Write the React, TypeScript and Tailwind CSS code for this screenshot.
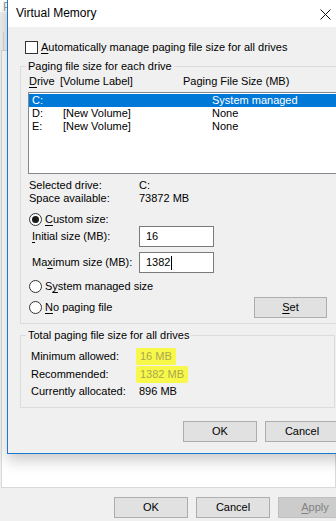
const font = "font-['Liberation_Sans',Arial,sans-serif]";

const U = ({ children }: { children: string }) => <span className="underline underline-offset-[2px]">{children}</span>;

const Radio = ({ checked }: { checked?: boolean }) => (
  <span className="flex h-[13px] w-[13px] shrink-0 items-center justify-center rounded-full border border-[#333] bg-white">
    {checked && <span className="h-[7px] w-[7px] rounded-full bg-[#1a1a1a]" />}
  </span>
);

const Btn = ({ children, w = 'w-[74px]', disabled }: { children: React.ReactNode; w?: string; disabled?: boolean }) => (
  <div
    className={`${w} flex h-[21px] shrink-0 items-center justify-center border ${
      disabled ? 'border-[#bfbfbf] bg-[#cccccc] text-[#838383]' : 'border-[#adadad] bg-[#e1e1e1] text-black'
    }`}
  >
    {children}
  </div>
);

const drives = [
  { d: 'C:', label: '', size: 'System managed', selected: true },
  { d: 'D:', label: '[New Volume]', size: 'None' },
  { d: 'E:', label: '[New Volume]', size: 'None' },
];

export default function App() {
  return (
    <div className={`relative h-[521px] w-[336px] overflow-hidden whitespace-nowrap bg-[#f0f0f0] text-[11px] leading-[13px] text-black ${font}`}>
      {/* parent window: Performance Options */}
      <div className="flex h-[12px] items-end overflow-hidden bg-white pl-[3px] text-[12px] text-[#9a9a9a]">
        <span className="leading-[10px]">P</span>
      </div>
      <div className="h-[20px]" />
      <div className="ml-[3px] h-[18px] border-l border-[#d9d9d9]" />
      <div className="ml-[1px] h-[438px] border border-[#d9d9d9] bg-white" />
      <div className="mt-[9px] flex gap-[8px] pl-[114px]">
        <Btn>OK</Btn>
        <Btn>Cancel</Btn>
        <Btn disabled>
          <U>A</U>pply
        </Btn>
      </div>

      {/* Virtual Memory dialog */}
      <div className="absolute left-[7px] top-0 flex h-[454px] w-[370px] flex-col border-b border-l border-[#1a78cf] bg-[#f0f0f0] shadow-[0_6px_14px_rgba(0,0,0,0.22)]">
        <div className="flex h-[27px] shrink-0 items-center bg-white">
          <span className="w-[312px] pl-[8px] text-[12px]">Virtual Memory</span>
          <svg width="11" height="11" viewBox="0 0 11 11" className="mt-[1px]">
            <path d="M0.5 0.5 L10.5 10.5 M10.5 0.5 L0.5 10.5" stroke="#111" strokeWidth="1" fill="none" />
          </svg>
        </div>

        <div className="pl-[17px] pt-[14px]">
          <div className="flex h-[13px] items-center gap-[3px]">
            <span className="h-[13px] w-[13px] border border-[#333] bg-white" />
            <span>
              <U>A</U>utomatically manage paging file size for all drives
            </span>
          </div>
        </div>

        <fieldset className="ml-[12px] mt-[5px] w-[315px] border border-[#dcdcdc] pb-[6px]">
          <legend className="ml-[5px] px-[2px] leading-[14px]">Paging file size for each drive</legend>
          <div className="flex h-[14px] items-center pl-[8px] pt-[3px]">
            <span className="w-[31px]">
              <U>D</U>rive
            </span>
            <span className="w-[123px]">[Volume Label]</span>
            <span>Paging File Size (MB)</span>
          </div>
          <div className="ml-[7px] mt-[5px] h-[82px] w-[320px] border border-[#828790] bg-white pt-[1px]">
            {drives.map((r) => (
              <div
                key={r.d}
                className={`flex h-[13px] items-center pl-[3px] ${r.selected ? 'bg-[#0078d7] text-white' : ''}`}
              >
                <span className="w-[31px]">{r.d}</span>
                <span className="w-[149px]">{r.label}</span>
                <span>{r.size}</span>
              </div>
            ))}
          </div>

          <div className="mt-[5px] pl-[8px]">
            <div className="flex h-[13px] items-center">
              <span className="w-[110px]">Selected drive:</span>
              <span>C:</span>
            </div>
            <div className="flex h-[13px] items-center">
              <span className="w-[110px]">Space available:</span>
              <span>73872 MB</span>
            </div>
          </div>

          <div className="mt-[8px] flex h-[13px] items-center gap-[3px] pl-[8px]">
            <Radio checked />
            <span>
              <U>C</U>ustom size:
            </span>
          </div>
          <div className="flex h-[21px] items-center">
            <span className="w-[118px] pl-[11px]">
              <U>I</U>nitial size (MB):
            </span>
            <div className="flex h-[21px] w-[75px] items-center border border-[#7a7a7a] bg-white pl-[6px]">16</div>
          </div>
          <div className="mt-[5px] flex h-[21px] items-center">
            <span className="w-[118px] pl-[11px]">
              Ma<U>x</U>imum size (MB):
            </span>
            <div className="flex h-[21px] w-[75px] items-center border border-[#7a7a7a] bg-white pl-[6px]">
              1382<span className="ml-[1px] h-[14px] w-[1px] bg-black" />
            </div>
          </div>

          <div className="mt-[7px] flex h-[13px] items-center gap-[3px] pl-[8px]">
            <Radio />
            <span>
              S<U>y</U>stem managed size
            </span>
          </div>
          <div className="mt-[4px] flex h-[20px] items-center">
            <div className="flex w-[233px] items-center gap-[3px] pl-[8px]">
              <Radio />
              <span>
                <U>N</U>o paging file
              </span>
            </div>
            <Btn w="w-[73px]">
              <U>S</U>et
            </Btn>
          </div>
        </fieldset>

        <fieldset className="ml-[12px] mt-[4px] w-[315px] border border-[#dcdcdc] pb-[7px] pt-[5px]">
          <legend className="ml-[5px] px-[2px] leading-[14px]">Total paging file size for all drives</legend>
          <div className="pl-[10px]">
            <div className="flex h-[18px] items-center">
              <span className="w-[109px]">Minimum allowed:</span>
              <span className="-ml-[4px] rounded-[2px] bg-[#f8f84a] px-[4px] py-[2px] text-[#a8a84e]">16 MB</span>
            </div>
            <div className="flex h-[18px] items-center">
              <span className="w-[109px]">Recommended:</span>
              <span className="-ml-[4px] rounded-[2px] bg-[#f8f84a] px-[4px] py-[2px] text-[#a8a84e]">1382 MB</span>
            </div>
            <div className="flex h-[17px] items-center">
              <span className="w-[108px]">Currently allocated:</span>
              <span>896 MB</span>
            </div>
          </div>
        </fieldset>

        <div className="ml-[175px] mt-[13px] flex gap-[8px]">
          <Btn>OK</Btn>
          <Btn>Cancel</Btn>
        </div>
      </div>
    </div>
  );
}
